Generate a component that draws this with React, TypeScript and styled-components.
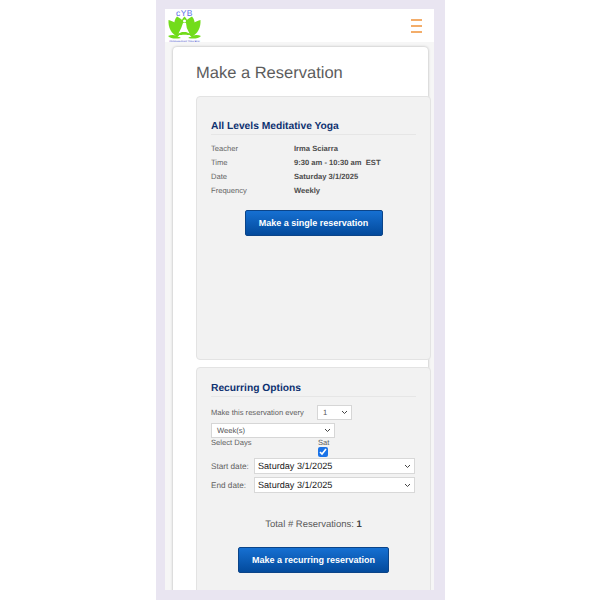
import React from "react";
import styled, { createGlobalStyle } from "styled-components";

const GlobalStyle = createGlobalStyle`
  html, body {
    margin: 0;
    padding: 0;
    width: 600px;
    height: 600px;
    overflow: hidden;
    background: #ffffff;
    font-family: "Liberation Sans", Arial, sans-serif;
    text-rendering: geometricPrecision;
  }
`;

const Page = styled.div`
  width: 289px;
  height: 600px;
  margin-left: 156px;
  padding: 9px 11px 10px 9px;
  box-sizing: border-box;
  background: #e9e5f1;
`;

const Frame = styled.div`
  width: 269px;
  height: 581px;
  background: #f6f6f6;
  display: flex;
  flex-direction: column;
  overflow: hidden;
`;

const Header = styled.header`
  height: 33px;
  flex: none;
  background: #ffffff;
  display: flex;
  align-items: center;
  justify-content: space-between;
  padding: 0 12px 0 2px;
`;

const Card = styled.main`
  width: 255px;
  flex: 1;
  margin: 5px 0 0 8px;
  box-sizing: border-box;
  padding: 0 0 0 23px;
  background: #ffffff;
  border-radius: 4px 4px 0 0;
  box-shadow: 0 0 3px rgba(0, 0, 0, 0.28);
`;

const Title = styled.h1`
  margin: 0;
  padding-top: 16px;
  height: 49px;
  box-sizing: border-box;
  font-size: 16.5px;
  line-height: 21px;
  font-weight: 400;
  color: #5c5c5c;
`;

const Panel = styled.section<{ $height: number; $pad: number }>`
  width: 235px;
  height: ${(p) => p.$height}px;
  box-sizing: border-box;
  padding: ${(p) => p.$pad}px 14px 0;
  margin-bottom: 7px;
  background: #f2f2f2;
  border: 1px solid #e3e3e3;
  border-radius: 4px;
`;

const PanelTitle = styled.h2`
  margin: 0 0 7px;
  font-size: 10.25px;
  line-height: 14px;
  font-weight: 700;
  color: #0d3170;
  border-bottom: 1px solid #e6e6e6;
`;

const InfoRow = styled.div`
  display: flex;
  height: 14px;
  font-size: 7.6px;
  line-height: 14px;
  color: #666666;
  b {
    color: #4c4c4c;
  }
`;

const InfoLabel = styled.span`
  width: 83px;
  flex: none;
`;

const ButtonRow = styled.div<{ $top: number }>`
  display: flex;
  justify-content: center;
  margin-top: ${(p) => p.$top}px;
`;

const BlueButton = styled.button<{ $width: number }>`
  width: ${(p) => p.$width}px;
  height: 26px;
  padding: 0;
  border: 1px solid #0b4488;
  border-radius: 2px;
  background: linear-gradient(#1670d2, #034a9c);
  color: #ffffff;
  font-family: inherit;
  font-size: 9px;
  font-weight: 700;
`;

const EveryRow = styled.div`
  display: flex;
  align-items: center;
  height: 16px;
  font-size: 7.6px;
  color: #5f5f5f;
`;

const EveryLabel = styled.span`
  width: 106px;
  flex: none;
`;

const MiniSelect = styled.div<{ $width: number }>`
  width: ${(p) => p.$width}px;
  height: 15px;
  box-sizing: border-box;
  padding: 0 3px 0 5px;
  display: flex;
  align-items: center;
  justify-content: space-between;
  background: #ffffff;
  border: 1px solid #d6d6d6;
  font-size: 7.6px;
  color: #555555;
`;

const WeekSelect = styled(MiniSelect)`
  margin-top: 3px;
`;

const DaysRow = styled.div`
  display: flex;
  font-size: 7.6px;
  line-height: 8px;
  color: #5f5f5f;
  margin: 1px 0;
`;

const DaysLabel = styled.span`
  width: 107px;
  flex: none;
`;

const DayColumn = styled.div`
  display: flex;
  flex-direction: column;
  align-items: flex-start;
`;

const Check = styled.input`
  width: 10px;
  height: 10px;
  margin: 0;
  accent-color: #1a73e8;
`;

const DateRow = styled.div`
  display: flex;
  align-items: center;
  height: 16px;
  margin-bottom: 3px;
  font-size: 8.2px;
  color: #5f5f5f;
`;

const DateLabel = styled.span`
  width: 43px;
  flex: none;
`;

const DateSelect = styled.div`
  width: 161px;
  height: 16px;
  box-sizing: border-box;
  padding: 0 3px;
  display: flex;
  align-items: center;
  justify-content: space-between;
  background: #ffffff;
  border: 1px solid #d8d8d8;
  font-size: 9.1px;
  color: #222222;
`;

const Total = styled.div`
  margin-top: 26px;
  text-align: center;
  font-size: 9.5px;
  line-height: 12px;
  color: #5a5a5a;
  b {
    color: #444444;
  }
`;

const Chevron = () => (
  <svg width="7" height="5" viewBox="0 0 7 5" fill="none">
    <path d="M1 1l2.500 2.500L6 1" stroke="#444" strokeWidth="1" />
  </svg>
);

const Burger = () => (
  <svg width="11" height="14" viewBox="0 0 11 14" fill="none">
    <path d="M0 1h11M0 7h11M0 13h11" stroke="#f0923a" strokeWidth="1.300" />
  </svg>
);

const Logo = () => (
  <svg width="35" height="33" viewBox="0 0 35 33">
    <text x="17.5" y="7" textAnchor="middle" fontSize="8.5" letterSpacing="0.5" fill="#5468e6" fontFamily="Liberation Sans">
      cYB
    </text>
    <g fill="#72dc1a">
      <path d="M1.500 11C1 18 4 25 11 28l4-6C12 15 6 12 1.500 11z" />
      <path d="M33.500 11C34 18 31 25 24 28l-4-6C23 15 29 12 33.500 11z" />
      <path d="M10 7.500C6 12 6 20 11 26h13c5-6 5-14 1-18.500-3 1.500-5 3-7.500 6-2.500-3-4.500-4.500-7.500-6z" />
      <path d="M17.500 7.500c-4 4-5 9-3 16h6c2-7 1-12-3-16z" />
      <path d="M1 27c4-2 9-1 13 2-5 1-10 1-13-2z" />
      <path d="M34 27c-4-2-9-1-13 2 5 1 10 1 13-2z" />
    </g>
    <g fill="#ffffff">
      <circle cx="17.500" cy="12" r="1.500" />
      <path d="M16 14h3l.8 5 2.700 5.500-3.500-1.500h-4l-3.500 1.500 2.700-5.500z" />
      <path d="M10.500 27.500c4-2.500 10-2.500 14 0-4 1.500-10 1.500-14 0z" />
    </g>
    <text x="17.5" y="32.500" textAnchor="middle" fontSize="2.600" fill="#3a49c9" fontFamily="Liberation Sans">
      Compassionate Yoga Bear
    </text>
  </svg>
);

export default function App() {
  return (
    <>
      <GlobalStyle />
      <Page>
        <Frame>
          <Header>
            <Logo />
            <Burger />
          </Header>
          <Card>
            <Title>Make a Reservation</Title>
            <Panel $height={264} $pad={23}>
              <PanelTitle>All Levels Meditative Yoga</PanelTitle>
              <InfoRow>
                <InfoLabel>Teacher</InfoLabel>
                <b>Irma Sciarra</b>
              </InfoRow>
              <InfoRow>
                <InfoLabel>Time</InfoLabel>
                <b>9:30 am - 10:30 am&nbsp; EST</b>
              </InfoRow>
              <InfoRow>
                <InfoLabel>Date</InfoLabel>
                <b>Saturday 3/1/2025</b>
              </InfoRow>
              <InfoRow>
                <InfoLabel>Frequency</InfoLabel>
                <b>Weekly</b>
              </InfoRow>
              <ButtonRow $top={12}>
                <BlueButton $width={138}>Make a single reservation</BlueButton>
              </ButtonRow>
            </Panel>
            <Panel $height={240} $pad={14}>
              <PanelTitle>Recurring Options</PanelTitle>
              <EveryRow>
                <EveryLabel>Make this reservation every</EveryLabel>
                <MiniSelect $width={35}>
                  1
                  <Chevron />
                </MiniSelect>
              </EveryRow>
              <WeekSelect $width={124}>
                Week(s)
                <Chevron />
              </WeekSelect>
              <DaysRow>
                <DaysLabel>Select Days</DaysLabel>
                <DayColumn>
                  Sat
                  <Check type="checkbox" defaultChecked />
                </DayColumn>
              </DaysRow>
              <DateRow>
                <DateLabel>Start date:</DateLabel>
                <DateSelect>
                  Saturday 3/1/2025
                  <Chevron />
                </DateSelect>
              </DateRow>
              <DateRow>
                <DateLabel>End date:</DateLabel>
                <DateSelect>
                  Saturday 3/1/2025
                  <Chevron />
                </DateSelect>
              </DateRow>
              <Total>
                Total # Reservations: <b>1</b>
              </Total>
              <ButtonRow $top={16}>
                <BlueButton $width={151}>Make a recurring reservation</BlueButton>
              </ButtonRow>
            </Panel>
          </Card>
        </Frame>
      </Page>
    </>
  );
}
